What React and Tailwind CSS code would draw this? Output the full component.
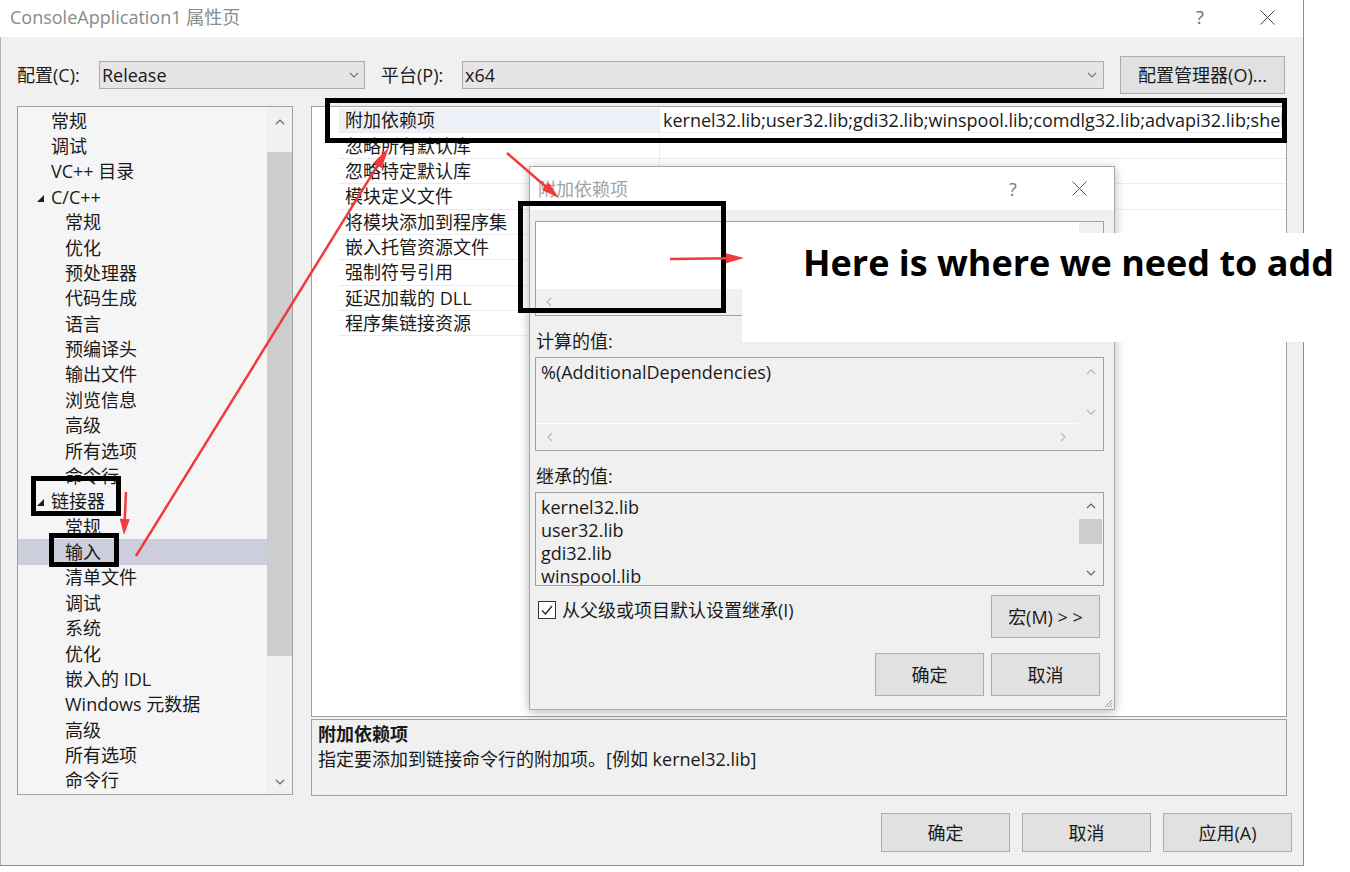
import React from 'react';

const FONT = "font-['Open_Sans','Noto_Sans_CJK_SC',sans-serif]";

function Chevron({ dir = 'down', color = '#606060' }) {
  if (dir === 'left' || dir === 'right') {
    const p = dir === 'left' ? '5,1 1,5 5,9' : '1,1 5,5 1,9';
    return (
      <svg width="6" height="10" viewBox="0 0 6 10" className="block">
        <polyline points={p} fill="none" stroke={color} strokeWidth="1.1" />
      </svg>
    );
  }
  const p = dir === 'down' ? '1,1 5,5 9,1' : '1,5 5,1 9,5';
  return (
    <svg width="10" height="6" viewBox="0 0 10 6" className="block">
      <polyline points={p} fill="none" stroke={color} strokeWidth="1.1" />
    </svg>
  );
}

function CloseX({ color = '#333' }) {
  return (
    <svg width="15" height="15" viewBox="0 0 15 15" className="block">
      <line x1="0.5" y1="0.5" x2="14.5" y2="14.5" stroke={color} strokeWidth="1" />
      <line x1="14.5" y1="0.5" x2="0.5" y2="14.5" stroke={color} strokeWidth="1" />
    </svg>
  );
}

function Arrow({ x1, y1, x2, y2, L = 20, W = 5, sw = 2 }) {
  const dx = x2 - x1;
  const dy = y2 - y1;
  const len = Math.hypot(dx, dy);
  const ux = dx / len;
  const uy = dy / len;
  const bx = x2 - ux * L;
  const by = y2 - uy * L;
  const px = -uy;
  const py = ux;
  const c = '#f23a3a';
  return (
    <g>
      <line x1={x1} y1={y1} x2={bx + ux * 3} y2={by + uy * 3} stroke={c} strokeWidth={sw} />
      <polygon
        points={`${x2},${y2} ${bx + px * W},${by + py * W} ${bx - px * W},${by - py * W}`}
        fill={c}
      />
    </g>
  );
}

const treeItems = [
  { t: '常规', l: 0 },
  { t: '调试', l: 0 },
  { t: 'VC++ 目录', l: 0 },
  { t: 'C/C++', l: 0, exp: true },
  { t: '常规', l: 1 },
  { t: '优化', l: 1 },
  { t: '预处理器', l: 1 },
  { t: '代码生成', l: 1 },
  { t: '语言', l: 1 },
  { t: '预编译头', l: 1 },
  { t: '输出文件', l: 1 },
  { t: '浏览信息', l: 1 },
  { t: '高级', l: 1 },
  { t: '所有选项', l: 1 },
  { t: '命令行', l: 1 },
  { t: '链接器', l: 0, exp: true },
  { t: '常规', l: 1 },
  { t: '输入', l: 1, sel: true },
  { t: '清单文件', l: 1 },
  { t: '调试', l: 1 },
  { t: '系统', l: 1 },
  { t: '优化', l: 1 },
  { t: '嵌入的 IDL', l: 1 },
  { t: 'Windows 元数据', l: 1 },
  { t: '高级', l: 1 },
  { t: '所有选项', l: 1 },
  { t: '命令行', l: 1 },
];

const gridRows = [
  '附加依赖项',
  '忽略所有默认库',
  '忽略特定默认库',
  '模块定义文件',
  '将模块添加到程序集',
  '嵌入托管资源文件',
  '强制符号引用',
  '延迟加载的 DLL',
  '程序集链接资源',
];

const VALUE =
  'kernel32.lib;user32.lib;gdi32.lib;winspool.lib;comdlg32.lib;advapi32.lib;shell32.lib;ole32.lib;oleaut32.lib;uuid.lib;odbc32.lib;odbccp32.lib;%(AdditionalDependencies)';

function Tree() {
  return (
    <div className="w-[276px] h-[689px] border border-[#a0a0a0] bg-[#f5f5f5] flex">
      <div className="flex-1 pt-[1px] overflow-hidden">
        {treeItems.map((it, i) => (
          <div
            key={i}
            className={`h-[25.38px] flex items-center whitespace-nowrap ${it.sel ? 'bg-[#cccedb]' : ''}`}
          >
            {it.l === 0 ? (
              <div className="w-[33px] flex justify-end pr-[7px] pt-[3px]">
                {it.exp && (
                  <svg width="7" height="7" viewBox="0 0 7 7" className="block">
                    <polygon points="7,0 7,7 0,7" fill="#1e1e1e" />
                  </svg>
                )}
              </div>
            ) : (
              <div className="w-[47px]" />
            )}
            <span className="leading-none">{it.t}</span>
          </div>
        ))}
      </div>
      <div className="w-[25px] bg-[#f0f0f0] flex flex-col">
        <div className="h-[30px] flex items-center justify-center">
          <Chevron dir="up" />
        </div>
        <div className="h-[15px]" />
        <div className="h-[504px] bg-[#cdcdcd]" />
        <div className="flex-1" />
        <div className="h-[25px] flex items-center justify-center">
          <Chevron dir="down" />
        </div>
      </div>
    </div>
  );
}

function Grid() {
  return (
    <div className="h-[611px] border border-[#a0a0a0] bg-white pt-[1px] overflow-hidden">
      {gridRows.map((r, i) => (
        <div key={i} className="h-[25.38px] flex">
          <div className="w-[27px]" />
          <div
            className={`w-[321px] pl-[6px] flex items-center border-b border-r border-[#ececec] whitespace-nowrap ${
              i === 0 ? 'bg-[#edf1f7]' : ''
            }`}
          >
            <span className="leading-none">{r}</span>
          </div>
          <div className="flex-1 min-w-0 pl-[3px] flex items-center border-b border-[#ececec] overflow-hidden whitespace-nowrap">
            {i === 0 && <span className="leading-none">{VALUE}</span>}
          </div>
        </div>
      ))}
    </div>
  );
}

function Btn({ w, h, children, className = '' }) {
  return (
    <div
      className={`${w} ${h} bg-[#e1e1e1] border border-[#adadad] flex items-center justify-center whitespace-nowrap ${className}`}
    >
      <span className="leading-none">{children}</span>
    </div>
  );
}

function Dialog() {
  return (
    <div className="absolute left-[529px] top-[166px] w-[586px] h-[544px] border border-[#a9a9a9] bg-[#f0f0f0] shadow-[0_2px_10px_rgba(0,0,0,0.28)] flex flex-col">
      <div className="h-[43px] bg-white flex items-center pl-[8px] pr-[27px]">
        <span className="flex-1 leading-none text-[#a3a3a3]">附加依赖项</span>
        <span className="w-[20px] text-center leading-none text-[#7a7a7a]">?</span>
        <div className="ml-[49px]">
          <CloseX color="#555" />
        </div>
      </div>
      <div className="pl-[5px] pt-[11px] flex flex-col">
        {/* edit box */}
        <div className="w-[569px] h-[95px] border border-[#a0a0a0] bg-white flex flex-col">
          <div className="flex-1 flex">
            <div className="flex-1" />
            <div className="w-[24px] bg-[#f0f0f0]" />
          </div>
          <div className="h-[26px] bg-[#f0f0f0] flex items-center pl-[10px]">
            <Chevron dir="left" color="#b5b5b5" />
          </div>
        </div>

        <div className="mt-[13px] h-[24px] pl-[1px] flex items-center">
          <span className="leading-none">计算的值:</span>
        </div>
        {/* computed box */}
        <div className="mt-[4px] w-[569px] h-[94px] border border-[#a0a0a0] bg-[#f0f0f0] flex flex-col">
          <div className="flex-1 flex">
            <div className="flex-1 border-b border-white pl-[5px] pt-[1px]">
              <div className="h-[25px] flex items-center">
                <span className="leading-none">%(AdditionalDependencies)</span>
              </div>
            </div>
            <div className="w-[25px] flex flex-col items-center pt-[11px]">
              <Chevron dir="up" color="#b5b5b5" />
              <div className="h-[34px]" />
              <Chevron dir="down" color="#b5b5b5" />
            </div>
          </div>
          <div className="h-[26px] flex items-center justify-between pl-[11px] pr-[37px]">
            <Chevron dir="left" color="#b5b5b5" />
            <Chevron dir="right" color="#b5b5b5" />
          </div>
        </div>

        <div className="mt-[13px] h-[24px] pl-[1px] flex items-center">
          <span className="leading-none">继承的值:</span>
        </div>
        {/* inherited box */}
        <div className="mt-[4px] w-[569px] h-[94px] border border-[#a0a0a0] bg-[#f0f0f0] flex overflow-hidden">
          <div className="flex-1 pl-[5px] pt-[2px]">
            {['kernel32.lib', 'user32.lib', 'gdi32.lib', 'winspool.lib'].map((t) => (
              <div key={t} className="h-[23px] flex items-center">
                <span className="leading-none">{t}</span>
              </div>
            ))}
          </div>
          <div className="w-[25px] flex flex-col items-center pt-[10px]">
            <Chevron dir="up" />
            <div className="mt-[10px] w-[23px] h-[25px] bg-[#cdcdcd]" />
            <div className="mt-[26px]">
              <Chevron dir="down" />
            </div>
          </div>
        </div>

        {/* checkbox row */}
        <div className="mt-[9px] w-[569px] h-[43px] flex justify-between items-start pr-[4px]">
          <div className="flex items-center pl-[3px] mt-[6px]">
            <div className="w-[18px] h-[18px] border border-[#333] bg-white flex items-center justify-center">
              <svg width="14" height="14" viewBox="0 0 14 14" className="block">
                <polyline points="2,7.5 5.5,11 12,3" fill="none" stroke="#222" strokeWidth="1.3" />
              </svg>
            </div>
            <span className="ml-[6px] leading-none">从父级或项目默认设置继承(I)</span>
          </div>
          <Btn w="w-[109px]" h="h-[43px]">宏(M) &gt; &gt;</Btn>
        </div>

        <div className="mt-[15px] w-[569px] flex justify-end gap-[7px] pr-[4px]">
          <Btn w="w-[109px]" h="h-[43px]">确定</Btn>
          <Btn w="w-[109px]" h="h-[43px]">取消</Btn>
        </div>
      </div>
      <svg width="10" height="10" viewBox="0 0 10 10" className="absolute right-[1px] bottom-[1px]">
        <line x1="9" y1="2" x2="2" y2="9" stroke="#9a9a9a" strokeWidth="1" />
        <line x1="9" y1="5" x2="5" y2="9" stroke="#9a9a9a" strokeWidth="1" />
        <line x1="9" y1="8" x2="8" y2="9" stroke="#9a9a9a" strokeWidth="1" />
      </svg>
    </div>
  );
}

export default function App() {
  return (
    <div className={`relative w-[1350px] h-[872px] bg-white overflow-hidden text-[18px] text-[#1a1a1a] ${FONT}`}>
      {/* main window */}
      <div className="w-[1304px] h-[866px] flex flex-col border-r border-b border-[#8f8f8f]">
        <div className="h-[37px] bg-white flex items-center pl-[10px] pr-[28px] pb-[3px]">
          <span className="flex-1 leading-none text-[#8a8a8a]">ConsoleApplication1 属性页</span>
          <span className="w-[20px] text-center leading-none text-[#6a6a6a]">?</span>
          <div className="ml-[50px]">
            <CloseX color="#444" />
          </div>
        </div>
        <div className="flex-1 bg-[#f0f0f0] border-l border-[#b0b0b0] flex flex-col">
          {/* config row */}
          <div className="h-[38px] mt-[19px] pl-[16px] flex items-center">
            <span className="w-[82px] leading-none whitespace-nowrap">配置(C):</span>
            <div className="w-[266px] h-[28px] bg-[#e5e5e5] border border-[#acacac] flex items-center justify-between pl-[2px] pr-[5px]">
              <span className="leading-none">Release</span>
              <Chevron dir="down" color="#707070" />
            </div>
            <span className="ml-[16px] w-[81px] leading-none whitespace-nowrap">平台(P):</span>
            <div className="w-[642px] h-[28px] bg-[#e5e5e5] border border-[#acacac] flex items-center justify-between pl-[2px] pr-[6px]">
              <span className="leading-none">x64</span>
              <Chevron dir="down" color="#707070" />
            </div>
            <Btn w="w-[165px]" h="h-[38px]" className="ml-[16px]">
              配置管理器(O)...
            </Btn>
          </div>

          {/* main area */}
          <div className="mt-[12px] pl-[16px] flex">
            <Tree />
            <div className="ml-[18px] w-[976px] flex flex-col">
              <Grid />
              <div className="mt-[2px] h-[77px] border border-[#a0a0a0] bg-[#f0f0f0] pl-[6px] pt-[1px]">
                <div className="h-[25px] flex items-center">
                  <span className="leading-none font-bold">附加依赖项</span>
                </div>
                <div className="h-[25px] flex items-center">
                  <span className="leading-none">指定要添加到链接命令行的附加项。[例如 kernel32.lib]</span>
                </div>
              </div>
            </div>
          </div>

          {/* bottom buttons */}
          <div className="mt-[17px] flex justify-end gap-[12px] pr-[11px]">
            <Btn w="w-[129px]" h="h-[39px]">确定</Btn>
            <Btn w="w-[129px]" h="h-[39px]">取消</Btn>
            <Btn w="w-[129px]" h="h-[39px]">应用(A)</Btn>
          </div>
        </div>
      </div>

      <Dialog />

      {/* black annotation rectangles */}
      <div className="absolute left-[325px] top-[98px] w-[962px] h-[45px] border-[5px] border-black" />
      <div className="absolute left-[31px] top-[476px] w-[90px] h-[40px] border-[5px] border-black" />
      <div className="absolute left-[49px] top-[533px] w-[70px] h-[34px] border-[5px] border-black" />
      <div className="absolute left-[518px] top-[201px] w-[208px] h-[112px] border-[5px] border-black" />

      {/* white annotation box */}
      <div className="absolute left-[742px] top-[233px] w-[608px] h-[109px] bg-white pl-[61px] pt-[10px]">
        <div className="h-[40px] flex items-center">
          <span className="leading-none text-[36px] font-bold text-black whitespace-nowrap">
            Here is where we need to add
          </span>
        </div>
      </div>

      {/* red arrows */}
      <svg width="1350" height="872" viewBox="0 0 1350 872" className="absolute left-0 top-0 pointer-events-none">
        <Arrow x1={136} y1={556} x2={389} y2={147} L={22} W={5} sw={2.5} />
        <Arrow x1={126} y1={492} x2={124} y2={535} L={16} W={5} sw={2.5} />
        <Arrow x1={507} y1={153} x2={559} y2={198} L={18} W={5} sw={2.5} />
        <Arrow x1={670} y1={259} x2={744} y2={258} L={18} W={5} sw={2.5} />
      </svg>
    </div>
  );
}
